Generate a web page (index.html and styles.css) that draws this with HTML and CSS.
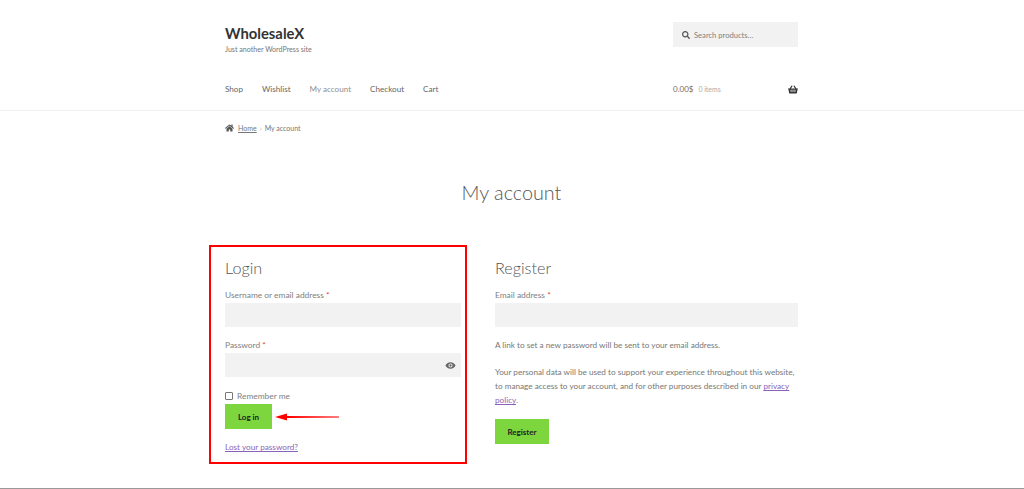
FILE: index.html
```html
<!DOCTYPE html>
<html lang="en">
<head>
<meta charset="utf-8">
<title>My account – WholesaleX</title>
<link rel="stylesheet" href="styles.css">
</head>
<body>
<header class="site-header">
  <div class="wrap">
    <div class="top-row">
      <div class="branding">
        <div class="site-title">WholesaleX</div>
        <div class="tagline">Just another WordPress site</div>
      </div>
      <div class="search">
        <svg class="search-icon" viewBox="0 0 512 512"><path d="M505 442.700L405.300 343c-4.500-4.500-10.600-7-17-7H372c27.600-35.300 44-79.700 44-128C416 93.100 322.900 0 208 0S0 93.100 0 208s93.100 208 208 208c48.300 0 92.700-16.400 128-44v16.300c0 6.400 2.500 12.500 7 17l99.700 99.700c9.400 9.400 24.600 9.400 33.900 0l28.300-28.300c9.400-9.400 9.400-24.600.1-34zM208 336c-70.700 0-128-57.200-128-128 0-70.700 57.200-128 128-128 70.700 0 128 57.200 128 128 0 70.700-57.200 128-128 128z"/></svg>
        <span>Search products…</span>
      </div>
    </div>
    <div class="nav-row">
      <nav class="nav">
        <a>Shop</a>
        <a>Wishlist</a>
        <a class="current">My account</a>
        <a>Checkout</a>
        <a>Cart</a>
      </nav>
      <div class="cart">
        <span class="amount">0.00$</span>
        <span class="count">0 items</span>
        <svg class="basket" viewBox="0 0 576 512"><path d="M576 216v16c0 13.300-10.700 24-24 24h-8l-26.100 182.800C514.500 462.400 494.200 480 470.300 480H105.700c-23.900 0-44.200-17.600-47.500-41.200L32 256h-8c-13.300 0-24-10.700-24-24v-16c0-13.300 10.700-24 24-24h67.300l106.800-146.800c10.400-14.300 30.400-17.500 44.700-7.100 14.300 10.400 17.500 30.400 7.100 44.700L170.400 192h235.200L326.100 82.800c-10.400-14.300-7.200-34.300 7.100-44.700 14.300-10.400 34.300-7.200 44.700 7.100L484.700 192H552c13.300 0 24 10.700 24 24zM312 392V280c0-13.300-10.700-24-24-24s-24 10.700-24 24v112c0 13.300 10.700 24 24 24s24-10.700 24-24zm112 0V280c0-13.300-10.700-24-24-24s-24 10.700-24 24v112c0 13.300 10.700 24 24 24s24-10.700 24-24zm-224 0V280c0-13.300-10.700-24-24-24s-24 10.700-24 24v112c0 13.300 10.700 24 24 24s24-10.700 24-24z"/></svg>
      </div>
    </div>
  </div>
</header>

<main class="wrap">
  <div class="breadcrumb">
    <svg class="home" viewBox="0 0 576 512"><path d="M280.400 148.300L96 300.100V464a16 16 0 0 0 16 16l112.100-.3a16 16 0 0 0 15.900-16V368a16 16 0 0 1 16-16h64a16 16 0 0 1 16 16v95.600a16 16 0 0 0 16 16.100L464 480a16 16 0 0 0 16-16V300L295.700 148.300a12.200 12.200 0 0 0-15.300 0zM571.600 251.500L488 182.600V44.100a12 12 0 0 0-12-12h-56a12 12 0 0 0-12 12v72.600L318.500 43a48 48 0 0 0-61 0L4.300 251.500a12 12 0 0 0-1.600 16.900l25.500 31A12 12 0 0 0 45.200 301l235.200-193.700a12.200 12.200 0 0 1 15.300 0L530.900 301a12 12 0 0 0 16.900-1.600l25.500-31a12 12 0 0 0-1.700-16.900z"/></svg>
    <a class="crumb-link">Home</a>
    <span class="sep">›</span>
    <span>My account</span>
  </div>
  <h1 class="page-title">My account</h1>
  <div class="columns">
    <section class="col-login">
      <h2 class="col-title">Login</h2>
      <label class="field-label">Username or email address <span class="req">*</span></label>
      <div class="input"></div>
      <label class="field-label gap-label">Password <span class="req">*</span></label>
      <div class="input with-eye">
        <svg class="eye" viewBox="0 0 24 24"><path d="M12 5C7 5 2.700 8.100 1 12c1.700 3.900 6 7 11 7s9.300-3.100 11-7c-1.700-3.900-6-7-11-7zm0 11.500a4.500 4.500 0 1 1 0-9 4.500 4.500 0 0 1 0 9zm0-7a2.500 2.500 0 1 0 0 5 2.500 2.500 0 0 0 0-5z"/></svg>
      </div>
      <div class="remember"><span class="checkbox"></span><span>Remember me</span></div>
      <a class="btn btn-login">Log in</a>
      <a class="lost">Lost your password?</a>
      <div class="callout-box"></div>
      <svg class="callout-arrow" viewBox="0 0 64 8"><path d="M0 4L12 .5V3L64 3.400V4.600L12 5V7.500Z"/></svg>
    </section>
    <section class="col-register">
      <h2 class="col-title">Register</h2>
      <label class="field-label">Email address <span class="req">*</span></label>
      <div class="input"></div>
      <p class="note first">A link to set a new password will be sent to your email address.</p>
      <p class="note second">Your personal data will be used to support your experience throughout this website, to manage access to your account, and for other purposes described in our <a class="privacy">privacy policy</a>.</p>
      <a class="btn btn-register">Register</a>
    </section>
  </div>
</main>
<div class="bottom-line"></div>
</body>
</html>
```
FILE: styles.css
```css
* { box-sizing: border-box; }
html, body { height: 489px; overflow: hidden; }
body {
  margin: 0;
  background: #fff;
  color: #6d6d6d;
  font-family: "Lato", "Open Sans", sans-serif;
  font-size: 8.500px;
  position: relative;
}
.wrap { width: 573px; margin-left: 225px; }
.site-header { height: 111px; border-bottom: 1px solid #f0f0f0; }
.top-row { display: flex; justify-content: space-between; padding-top: 22px; height: 74px; }
.site-title { font-size: 14.800px; font-weight: 700; color: #333; line-height: 22px; }
.tagline { font-size: 7.100px; line-height: 10px; margin-top: 1px; color: #777; }
.search { width: 125px; height: 25px; background: #f2f2f2; display: flex; align-items: center; padding-left: 9px; gap: 4px; font-size: 7.600px; color: #808080; }
.search-icon { width: 8px; height: 8px; fill: #555; }
.nav-row { display: flex; justify-content: space-between; align-items: center; height: 30px; }
.nav { display: flex; gap: 19px; font-size: 8.100px; color: #666; }
.nav .current { color: #8f8f8f; }
.cart { width: 125px; display: flex; align-items: center; color: #7a6a60; font-size: 8px; }
.count { margin-left: 5px; font-size: 6.900px; color: #aaa; }
.basket { width: 10px; height: 9px; fill: #333; margin-left: auto; }
.breadcrumb { display: flex; align-items: center; height: 14px; margin-top: 10px; font-size: 7px; color: #777; }
.home { width: 9px; height: 8px; fill: #555; margin-right: 4px; }
.crumb-link { text-decoration: underline; }
.sep { margin: 0 3px; color: #aaa; }
.page-title { margin: 42px 0 0; text-align: center; font-size: 19.800px; font-weight: 300; line-height: 30px; color: #555; }
.columns { display: flex; gap: 34px; margin-top: 50px; }
.col-login { width: 236px; position: relative; }
.col-register { width: 303px; }
.col-title { margin: 0; font-size: 16.200px; font-weight: 300; line-height: 22px; color: #555; }
.field-label { display: block; margin-top: 11px; height: 10px; line-height: 10px; font-size: 8.400px; color: #808080; }
.gap-label { margin-top: 13px; }
.req { color: #e2401c; }
.input { height: 24px; margin-top: 3px; background: #f2f2f2; }
.with-eye { display: flex; justify-content: flex-end; align-items: center; padding-right: 5px; }
.eye { width: 11px; height: 11px; fill: #666; }
.remember { display: flex; align-items: center; gap: 4px; margin-top: 14px; height: 10px; font-size: 8.400px; color: #808080; }
.checkbox { flex: none; width: 8px; height: 8px; border: 1px solid #777; border-radius: 1px; background: #fff; }
.btn { display: flex; align-items: center; justify-content: center; height: 25px; background: #7ed63f; color: #222; font-weight: 700; font-size: 8px; }
.btn-login { width: 47px; margin-top: 3px; }
.btn-register { width: 54px; margin-top: 12px; }
.lost { display: block; margin-top: 13px; color: #8a63b8; text-decoration: underline; font-size: 8.200px; line-height: 10px; }
.note { margin: 0; font-size: 8.200px; line-height: 14px; color: #777; }
.note.first { margin-top: 11px; }
.note.second { margin-top: 13px; }
.privacy { color: #8a63b8; text-decoration: underline; }
.callout-box { position: absolute; left: -16px; top: -12px; width: 258px; height: 219px; border: 2.500px solid #f00; }
.callout-arrow { position: absolute; left: 50px; top: 156px; width: 64px; height: 8px; fill: #f00; }
.bottom-line { position: absolute; left: 0; right: 0; top: 488px; height: 1px; background: #999; }
```
